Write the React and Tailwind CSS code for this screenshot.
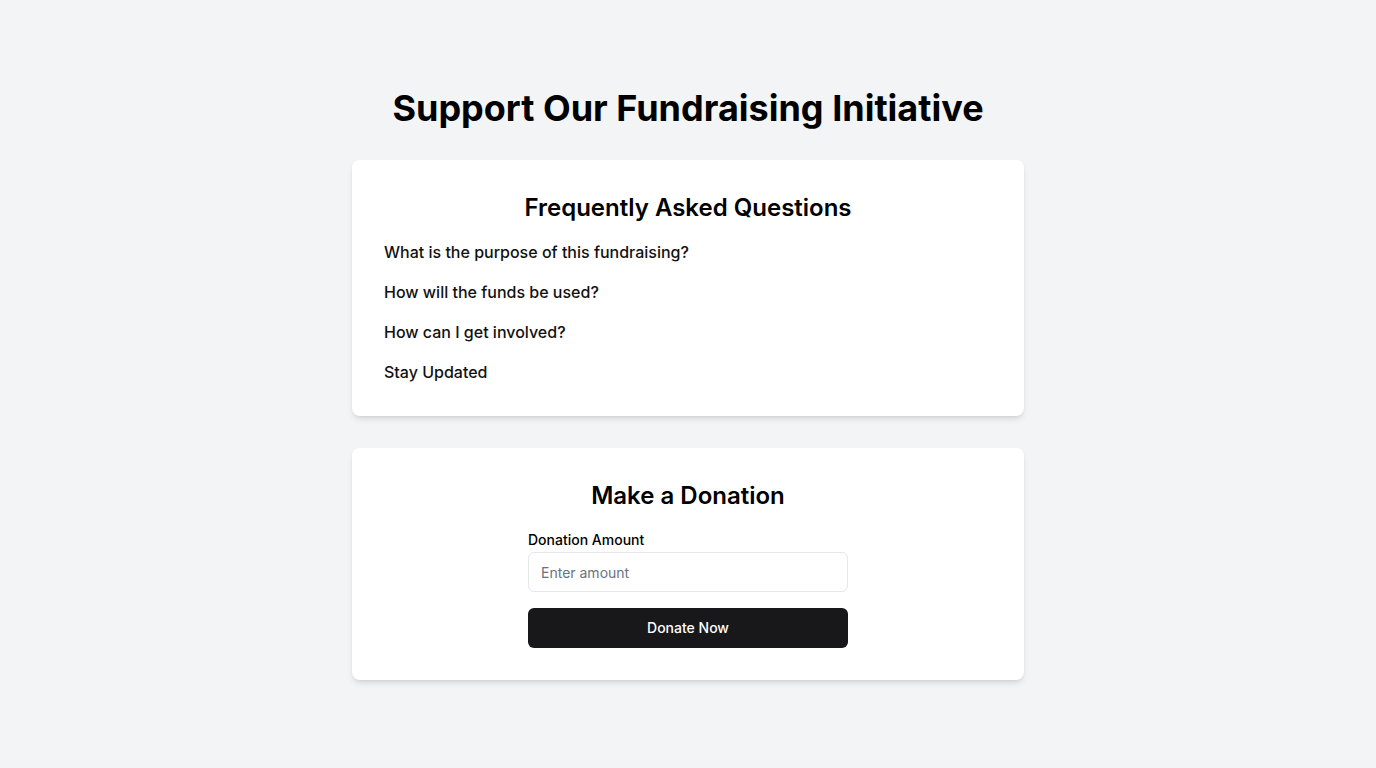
export default function App() {
  const faqs = [
    "What is the purpose of this fundraising?",
    "How will the funds be used?",
    "How can I get involved?",
    "Stay Updated",
  ];
  return (
    <div
      className="min-h-screen bg-gray-100 flex flex-col items-center justify-center text-black"
      style={{ fontFamily: "Inter, 'Noto Sans', sans-serif" }}
    >
      <h1 className="text-4xl font-bold mb-8">Support Our Fundraising Initiative</h1>
      <div className="w-full max-w-2xl bg-white rounded-lg shadow-md p-8 mb-8">
        <h2 className="text-2xl font-semibold text-center mb-4">Frequently Asked Questions</h2>
        <div className="flex flex-col gap-4">
          {faqs.map((q) => (
            <button key={q} className="text-left text-base font-medium leading-6 text-[#111]">
              {q}
            </button>
          ))}
        </div>
      </div>
      <div className="w-full max-w-2xl bg-white rounded-lg shadow-md p-8">
        <h2 className="text-2xl font-semibold text-center mb-[18px]">Make a Donation</h2>
        <div className="w-80 mx-auto flex flex-col">
          <label className="text-sm font-medium leading-5 mb-0.5">Donation Amount</label>
          <input
            type="text"
            placeholder="Enter amount"
            className="h-10 w-full rounded-md border border-gray-200 px-3 text-sm placeholder:text-gray-500 outline-none"
          />
          <button className="mt-4 h-10 w-full rounded-md bg-[#18181b] text-white text-sm font-medium">
            Donate Now
          </button>
        </div>
      </div>
    </div>
  );
}
